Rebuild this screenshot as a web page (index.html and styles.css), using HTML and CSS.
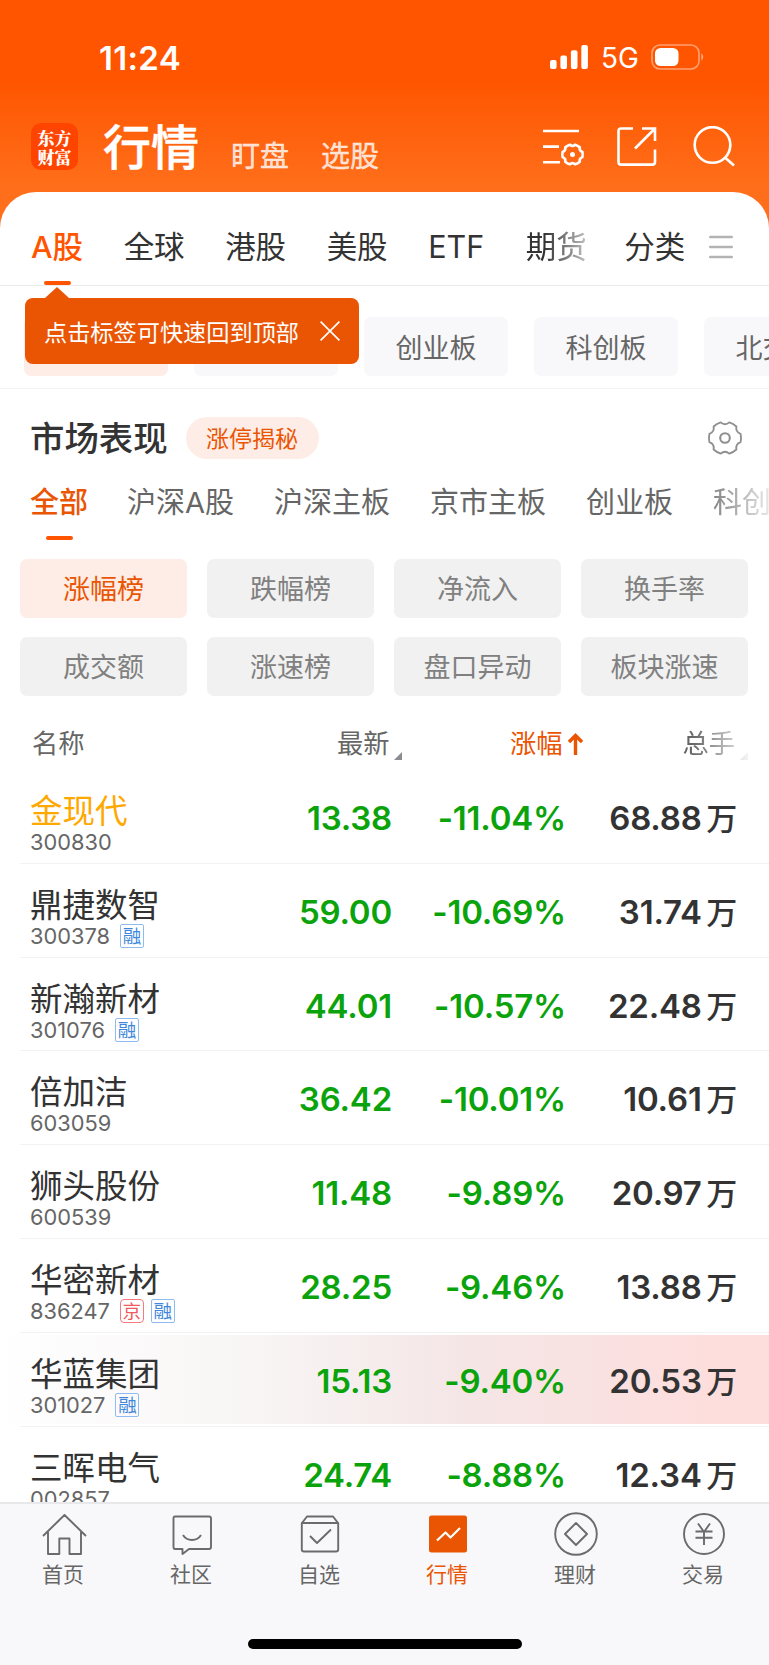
FILE: index.html
```html
<!DOCTYPE html>
<html lang="zh-CN">
<head>
<meta charset="utf-8">
<title>行情</title>
<link rel="stylesheet" href="styles.css">
</head>
<body>
<svg width="0" height="0" class="defs">
  <defs>
    <path id="gear" d="M15.9 -4.2Q16.9 0 15.9 4.2Q10.6 6.1 11.6 11.7Q8.5 14.6 4.3 15.9Q0 12.2 -4.3 15.9Q-8.5 14.6 -11.6 11.7Q-10.6 6.1 -15.9 4.2Q-16.9 0 -15.9 -4.2Q-10.6 -6.1 -11.6 -11.7Q-8.5 -14.6 -4.3 -15.9Q0 -12.2 4.3 -15.9Q8.5 -14.6 11.6 -11.7Q10.6 -6.1 15.9 -4.2Z"/>
  </defs>
</svg>
<div class="app">
  <header class="top">
    <div class="status">
      <span class="clock">11:24</span>
      <div class="status-right">
        <svg class="signal" width="38" height="24" viewBox="0 0 38 24" fill="#fff"><rect x="0" y="15" width="6.6" height="9" rx="2"/><rect x="10.4" y="10.5" width="6.6" height="13.5" rx="2"/><rect x="20.9" y="5.3" width="6.6" height="18.7" rx="2"/><rect x="31.3" y="0" width="6.6" height="24" rx="2"/></svg>
        <span class="net">5G</span>
        <svg class="battery" width="54" height="26" viewBox="0 0 54 26"><rect x="1" y="1" width="47" height="24" rx="8" fill="none" stroke="#fff" stroke-opacity=".45" stroke-width="1.6"/><path d="M50.3 9.3a4.5 4.5 0 0 1 0 7.4Z" fill="#fff" fill-opacity=".5"/><rect x="4" y="4" width="23.5" height="18" rx="5.5" fill="#fff"/></svg>
      </div>
    </div>
    <div class="nav">
      <div class="logo"><span>东方</span><span>财富</span></div>
      <h1>行情</h1>
      <span class="nav-link">盯盘</span>
      <span class="nav-link">选股</span>
      <div class="nav-icons">
        <svg width="42" height="42" viewBox="0 0 42 42" fill="none" stroke="#fff" stroke-width="2.6"><path d="M0 5H36M0 20.6H16M0 36.3H17"/><use href="#gear" transform="translate(29.5 28.5) scale(.62)" stroke-width="4.2"/><circle cx="29.5" cy="28.5" r="2.5" fill="#fff" stroke="none"/></svg>
        <svg width="42" height="42" viewBox="0 0 42 42" fill="none" stroke="#fff" stroke-width="2.6"><path d="M17 2.5H5Q2.5 2.5 2.5 5V36Q2.5 38.6 5 38.6H36.5Q39 38.6 39 36V23.5M26 2.5H39V15M39 2.5L19 22.5"/></svg>
        <svg width="42" height="42" viewBox="0 0 42 42" fill="none" stroke="#fff" stroke-width="2.6"><circle cx="19.5" cy="19" r="17.8"/><path d="M32 31.5L41 39.5"/></svg>
      </div>
    </div>
  </header>

  <main class="sheet">
    <nav class="markets">
      <span class="active">A股</span><span>全球</span><span>港股</span><span>美股</span><span>ETF</span><span class="fade-market">期货</span><span class="category">分类</span>
      <svg class="menu" width="24" height="26" viewBox="0 0 24 26" stroke="#b3b3b3" stroke-width="2.6" stroke-linecap="round"><path d="M1.3 3H22.7M1.3 13H22.7M1.3 23H22.7"/></svg>
    </nav>
    <div class="chips">
      <span class="chip chip-on"></span><span class="chip"></span><span class="chip">创业板</span><span class="chip">科创板</span><span class="chip">北交所</span>
    </div>
    <div class="tip">
      <span>点击标签可快速回到顶部</span>
      <svg width="20" height="20" viewBox="0 0 20 20" stroke="#fff" stroke-width="1.7"><path d="M.6 .6L19.4 19.4M19.4 .6L.6 19.4"/></svg>
    </div>

    <section class="perf">
      <div class="perf-head">
        <h2>市场表现</h2>
        <span class="pill">涨停揭秘</span>
        <svg class="perf-gear" width="36" height="36" viewBox="-18 -18 36 36" fill="none" stroke="#8f8f8f" stroke-width="1.9"><use href="#gear" transform="scale(.98)"/><circle r="4.8" stroke-width="2.1"/></svg>
      </div>
      <div class="boards">
        <span class="active">全部</span><span>沪深A股</span><span>沪深主板</span><span>京市主板</span><span>创业板</span><span class="fade-board">科创板</span>
      </div>
      <div class="ranks">
        <span class="on">涨幅榜</span><span>跌幅榜</span><span>净流入</span><span>换手率</span>
        <span>成交额</span><span>涨速榜</span><span>盘口异动</span><span>板块涨速</span>
      </div>
    </section>

    <section class="table">
      <div class="thead">
        <span>名称</span>
        <span class="th-num">最新<i class="corner"></i></span>
        <span class="th-num th-sort">涨幅<svg width="15" height="22" viewBox="0 0 15 22" fill="none" stroke="#ea5504" stroke-width="3.4"><path d="M7.5 22V2.5M1 9L7.5 2.5L14 9"/></svg></span>
        <span class="th-num th-vol">总手<i class="corner"></i></span>
      </div>
      <div class="row"><div class="stock"><b class="gold">金现代</b><small>300830</small></div><em>13.38</em><em>-11.04%</em><strong>68.88<u>万</u></strong></div>
      <div class="row"><div class="stock"><b>鼎捷数智</b><small>300378<i class="tag">融</i></small></div><em>59.00</em><em>-10.69%</em><strong>31.74<u>万</u></strong></div>
      <div class="row"><div class="stock"><b>新瀚新材</b><small>301076<i class="tag">融</i></small></div><em>44.01</em><em>-10.57%</em><strong>22.48<u>万</u></strong></div>
      <div class="row"><div class="stock"><b>倍加洁</b><small>603059</small></div><em>36.42</em><em>-10.01%</em><strong>10.61<u>万</u></strong></div>
      <div class="row"><div class="stock"><b>狮头股份</b><small>600539</small></div><em>11.48</em><em>-9.89%</em><strong>20.97<u>万</u></strong></div>
      <div class="row"><div class="stock"><b>华密新材</b><small>836247<i class="tag tag-red">京</i><i class="tag">融</i></small></div><em>28.25</em><em>-9.46%</em><strong>13.88<u>万</u></strong></div>
      <div class="row flash"><div class="stock"><b>华蓝集团</b><small>301027<i class="tag">融</i></small></div><em>15.13</em><em>-9.40%</em><strong>20.53<u>万</u></strong></div>
      <div class="row"><div class="stock"><b>三晖电气</b><small>002857</small></div><em>24.74</em><em>-8.88%</em><strong>12.34<u>万</u></strong></div>
    </section>
  </main>

  <footer class="tabbar">
    <div class="tabs">
      <div class="tab"><svg width="46" height="46" viewBox="0 0 46 46"><path d="M2 24L23.5 3L45 24M7 20V42H18.3V26.5H28.5V42H40V20"/></svg><span>首页</span></div>
      <div class="tab"><svg width="46" height="46" viewBox="0 0 46 46"><path d="M6 4.500H40Q42 4.500 42 6.500V35Q42 37 40 37H20L13.500 42V37H6Q4.500 37 4.500 35V6.500Q4.500 4.500 6 4.500ZM14 23Q17 28 23 28T32 23"/></svg><span>社区</span></div>
      <div class="tab"><svg width="46" height="46" viewBox="0 0 46 46"><path d="M5 11L10 4.500H36L41 11M4.800 11H41.200V37.500Q41.200 39.500 39 39.500H7Q4.800 39.500 4.800 37.500ZM13 24L20 31L34 17.500"/></svg><span>自选</span></div>
      <div class="tab current"><svg width="46" height="46" viewBox="0 0 46 46"><rect x="4" y="3.500" width="38" height="37" rx="2.500" fill="#ea5504" stroke="none"/><path d="M12 28.500L20.500 20.500L25.500 25.500L35 16" stroke="#fff" stroke-width="2.200"/></svg><span>行情</span></div>
      <div class="tab"><svg width="46" height="46" viewBox="0 0 46 46"><circle cx="23" cy="22" r="20.800"/><path d="M23 11L34 22L23 33L12 22Z"/></svg><span>理财</span></div>
      <div class="tab"><svg width="46" height="46" viewBox="0 0 46 46"><circle cx="23" cy="22" r="20"/><path d="M17 11.500L23 20L29 11.500M14.500 19.500H31.500M14.500 25.700H31.500M23 19.500V33"/></svg><span>交易</span></div>
    </div>
    <div class="home-bar"></div>
  </footer>
</div>
</body>
</html>
```

FILE: styles.css
```css
* { box-sizing: border-box; }
body {
  margin: 0;
  font-family: Inter, "Noto Sans CJK SC", sans-serif;
  color: #333;
  background: #fff;
}
h1, h2 { margin: 0; }
i, em { font-style: normal; }
u { text-decoration: none; }
svg { display: block; flex: none; }
.defs { position: absolute; }

.app {
  width: 769px;
  height: 1665px;
  overflow: hidden;
  display: flex;
  flex-direction: column;
  background: linear-gradient(#ff5500 0, #ff5500 80px, #ff6e1a 185px);
}

/* header */
.top { height: 192px; flex: none; color: #fff; }
.status {
  height: 114px;
  padding: 0 64px 0 99px;
  display: flex;
  align-items: center;
  justify-content: space-between;
}
.clock { font-size: 33px; font-weight: 600; line-height: 40px; letter-spacing: .3px; padding-top: 1px; }
.status-right { display: flex; align-items: center; }
.net { font-size: 28px; line-height: 34px; margin: 2px 12px 0 13px; }
.nav { height: 78px; padding: 0 34px 0 31px; display: flex; }
.logo {
  width: 47px;
  height: 47px;
  margin: 9px 25px 0 0;
  border-radius: 10px;
  background: #ff4400;
  display: flex;
  flex-direction: column;
  align-items: center;
  justify-content: center;
  font: 900 17px/19px "Noto Serif CJK SC", "Noto Sans CJK SC", sans-serif;
}
.nav h1 { font-size: 48px; font-weight: 500; line-height: 60px; margin: 4px 32px 0 0; -webkit-text-stroke: .5px #fff; }
.nav-link { font-size: 29px; line-height: 40px; margin: 23px 32px 0 0; color: rgba(255,255,255,.8); -webkit-text-stroke: .4px rgba(255,255,255,.8); }
.nav-icons { margin: 12px 0 0 auto; display: flex; gap: 31px; }
.nav-icons svg:last-child { margin-left: 4px; }

/* sheet */
.sheet {
  position: relative;
  flex: 1;
  min-height: 0;
  overflow: hidden;
  background: #fff;
  border-radius: 36px 36px 0 0;
}
.markets {
  height: 94px;
  padding: 17px 0 0 31px;
  border-bottom: 1.5px solid #ececec;
  display: flex;
  align-items: center;
  gap: 40.5px;
  font-size: 30.5px;
  line-height: 40px;
  white-space: nowrap;
}
.markets .active, .boards .active {
  position: relative;
  color: #ff5500;
  font-weight: 500;
}
.markets .active::after, .boards .active::after {
  content: "";
  position: absolute;
  left: 50%;
  bottom: -18px;
  width: 27px;
  height: 4px;
  margin-left: -13.5px;
  border-radius: 2px;
  background: #ff5500;
}
.fade-market { margin-left: 1px; -webkit-mask-image: linear-gradient(90deg, #000 30%, rgba(0,0,0,.3)); mask-image: linear-gradient(90deg, #000 30%, rgba(0,0,0,.3)); }
.category { margin-left: -3px; }
.menu { margin-left: -17px; }

.chips {
  height: 103px;
  padding: 31px 0 0 24px;
  border-bottom: 1px solid #f4f4f4;
  display: flex;
  gap: 26px;
  overflow: hidden;
}
.chip {
  flex: none;
  width: 144px;
  height: 59px;
  border-radius: 7px;
  background: #f8f8fa;
  color: #666;
  font-size: 27px;
  line-height: 63px;
  text-align: center;
}
.chip-on { background: #feede6; }
.tip {
  position: absolute;
  left: 25px;
  top: 106px;
  width: 334px;
  height: 66px;
  padding: 0 19px 1px 19px;
  border-radius: 8px;
  background: #ea5504;
  color: #fff;
  font-size: 23.2px;
  display: flex;
  align-items: center;
  justify-content: space-between;
}
.tip::before {
  content: "";
  position: absolute;
  left: 20px;
  top: -11px;
  border: 12px solid transparent;
  border-top: 0;
  border-bottom: 11px solid #ea5504;
}

/* market performance */
.perf-head { height: 98px; padding: 0 26px 0 30px; display: flex; align-items: center; }
.perf-head h2 { font-size: 34.4px; font-weight: 500; line-height: 44px; padding-top: 2px; }
.pill {
  width: 133px;
  height: 42px;
  margin-left: 18px;
  border-radius: 21px;
  background: #fdede6;
  color: #ea5504;
  font-size: 23px;
  line-height: 44px;
  text-align: center;
}
.perf-gear { margin-left: auto; }
.boards {
  height: 80px;
  margin-top: -8px;
  padding: 9px 0 0 30px;
  display: flex;
  gap: 40px;
  overflow: hidden;
  font-size: 29px;
  line-height: 30px;
  color: #666;
  white-space: nowrap;
}
.boards .active { color: #ea5504; height: 30px; margin-right: -1px; }
.boards .active::after { bottom: -22px; }
.fade-board { -webkit-mask-image: linear-gradient(90deg, rgba(0,0,0,.8), rgba(0,0,0,.1) 70%); mask-image: linear-gradient(90deg, rgba(0,0,0,.8), rgba(0,0,0,.1) 70%); }
.ranks {
  padding: 0 21px 0 20px;
  display: grid;
  grid-template-columns: repeat(4, 167px);
  gap: 20px;
  row-gap: 19.5px;
}
.ranks span {
  height: 58.5px;
  border-radius: 7px;
  background: #f1f1f1;
  color: #808080;
  font-size: 27px;
  line-height: 62px;
  text-align: center;
}
.ranks .on { background: #fdede6; color: #ea5504; }

/* quote table */
.thead, .row {
  display: grid;
  grid-template-columns: 190px 172px 173px 172px;
  padding: 0 32px 0 30px;
}
.thead { height: 74.5px; padding-top: 29px; font-size: 26.3px; line-height: 38px; color: #666; }
.thead > span:first-child { padding-left: 2px; }
.th-num { position: relative; height: 38px; text-align: right; padding-right: 2.5px; }
.corner {
  position: absolute;
  right: -10px;
  bottom: 3px;
  border-left: 8px solid transparent;
  border-bottom: 8px solid #8c8c91;
}
.th-sort { color: #ea5504; display: flex; justify-content: flex-end; align-items: center; gap: 5px; margin-right: -20px; }
.th-vol { margin-right: -11px; padding-right: 13px; -webkit-mask-image: linear-gradient(90deg, #000 70%, rgba(0,0,0,.1)); mask-image: linear-gradient(90deg, #000 70%, rgba(0,0,0,.1)); }
.th-vol .corner { right: 0; }
.row {
  position: relative;
  height: 93.8px;
  font-size: 33px;
  line-height: 40px;
  letter-spacing: -.2px;
}
.row::after {
  content: "";
  position: absolute;
  left: 20px;
  right: 0;
  bottom: 0;
  height: 1px;
  background: #f2f2f3;
}
.stock { padding-top: 23px; letter-spacing: 0; }
.stock b { display: block; font-weight: 400; font-size: 32.5px; line-height: 37px; white-space: nowrap; }
.stock .gold { color: #ffa800; }
.stock small { display: flex; align-items: center; height: 24px; font-size: 21.8px; line-height: 24px; color: #666; }
.tag {
  width: 24px;
  height: 24px;
  margin-left: 10px;
  border: 1.5px solid #8fbcf0;
  border-radius: 2px;
  color: #4087dc;
  font-size: 18.5px;
  line-height: 22px;
  text-align: center;
}
.tag + .tag { margin-left: 7px; }
.tag-red { border-color: #f37b80; border-radius: 4px; color: #ee5a60; }
.row em, .row strong { padding-top: 28px; text-align: right; font-weight: 600; color: #0ba30b; }
.row em + em { margin-right: -1px; }
.row strong { color: #333; }
.row u { font-weight: 500; font-size: 31px; margin-left: 4.5px; }
.flash { background: linear-gradient(90deg, #fff, #f8f4f4 35%, #f5e6e6 60%, #fddedd 92%, #fddedd) 0 2.5px / 100% 89px no-repeat; }

/* bottom bar */
.tabbar {
  position: relative;
  flex: none;
  height: 163px;
  background: #f8f8fa;
  border-top: 2px solid #e8e8ea;
}
.tabs { display: grid; grid-template-columns: repeat(6, 128px); height: 135px; }
.tab { display: flex; flex-direction: column; align-items: center; padding-top: 8px; color: #666; font-size: 21px; line-height: 30px; }
.tab svg { fill: none; stroke: #6b6b6b; stroke-width: 1.9; stroke-linejoin: round; }
.tab span { margin: 2px 2px 0 0; }
.tab.current { color: #ea5504; }
.home-bar { width: 274px; height: 10px; margin: 0 auto; border-radius: 5px; background: #000; }
```
